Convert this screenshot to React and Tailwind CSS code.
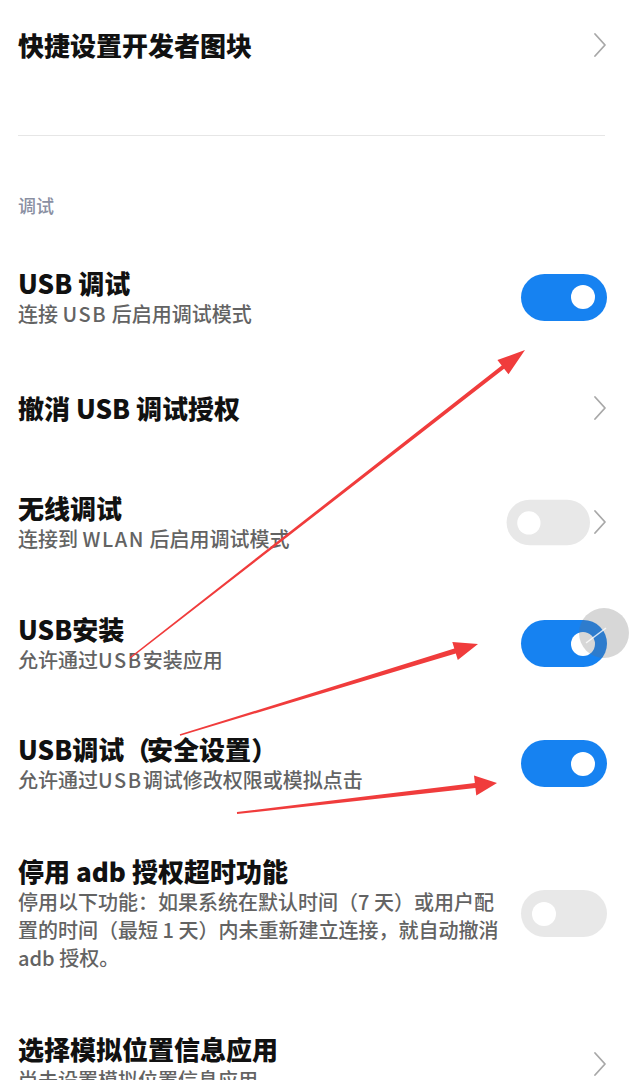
import React from 'react';

const font = { fontFamily: '"Noto Sans CJK SC", "Noto Sans", sans-serif' };

// chevron on the right side of link rows
const Chevron = () => (
  <svg width="14" height="26" viewBox="0 0 14 26" className="shrink-0">
    <polyline points="2,2 12,13 2,24" fill="none" stroke="#a8a8a8" strokeWidth="1.8" strokeLinecap="round" strokeLinejoin="round" />
  </svg>
);

const Toggle = ({ on }) => (
  <div
    className={
      'relative w-[86px] h-[47px] rounded-full shrink-0 ' +
      (on ? 'bg-[#1682f1]' : 'bg-[#e8e8e8]')
    }
  >
    <div
      className={
        'absolute top-[11.5px] w-[24px] h-[24px] rounded-full bg-white ' +
        (on ? 'right-[12px]' : 'left-[11px]')
      }
    />
  </div>
);

const Title = ({ children }) => (
  <div className="text-[26px] leading-[32px] font-black text-[#111]">{children}</div>
);

const Sub = ({ children }) => (
  <div className="mt-[1px] text-[20px] leading-[28px] font-medium text-[#636363]">{children}</div>
);

// latin words in the subtitles run a little wider
const L = ({ children }) => <span className="tracking-[0.08em]">{children}</span>;

// builds the tapered red arrow used for the annotations
const arrowPoints = (tx, ty, px, py, headLen, headW, neckW, tailW) => {
  const dx = px - tx;
  const dy = py - ty;
  const len = Math.sqrt(dx * dx + dy * dy);
  const ux = dx / len;
  const uy = dy / len;
  const nx = -uy;
  const ny = ux;
  const kx = px - ux * headLen;
  const ky = py - uy * headLen;
  const pts = [
    [tx + nx * tailW / 2, ty + ny * tailW / 2],
    [kx + nx * neckW / 2, ky + ny * neckW / 2],
    [kx + nx * headW / 2, ky + ny * headW / 2],
    [px, py],
    [kx - nx * headW / 2, ky - ny * headW / 2],
    [kx - nx * neckW / 2, ky - ny * neckW / 2],
    [tx - nx * tailW / 2, ty - ny * tailW / 2],
  ];
  return pts.map(p => p[0].toFixed(1) + ',' + p[1].toFixed(1)).join(' ');
};

export default function App() {
  return (
    <div className="relative w-[640px] h-[1080px] overflow-hidden bg-white" style={font}>
      <div className="pl-[18px] pr-[33px]">
        {/* quick settings tile row */}
        <div className="h-[90px] flex items-center justify-between">
          <Title>快捷设置开发者图块</Title>
          <Chevron />
        </div>

        <div className="h-[45px]" />
        <div className="border-t border-[#e6e6e6] mr-[2px]" />

        <div className="mt-[57px] text-[18px] leading-[24px] font-medium text-[#8a8fa2]">调试</div>

        {/* USB 调试 */}
        <div className="mt-[20px] h-[120px] flex items-center justify-between">
          <div>
            <Title>USB 调试</Title>
            <Sub>连接 <L>USB</L> 后启用调试模式</Sub>
          </div>
          <Toggle on />
        </div>

        {/* 撤消 */}
        <div className="h-[101px] flex items-center justify-between">
          <Title>撤消 USB 调试授权</Title>
          <Chevron />
        </div>

        {/* 无线调试 */}
        <div className="h-[128px] flex items-center justify-between">
          <div>
            <Title>无线调试</Title>
            <Sub>连接到 <L>WLAN</L> 后启用调试模式</Sub>
          </div>
          <div className="flex items-center gap-[3px]">
            <div className="scale-[0.97] origin-right">
              <Toggle />
            </div>
            <Chevron />
          </div>
        </div>

        {/* USB安装 */}
        <div className="h-[115px] flex items-center justify-between">
          <div>
            <Title>USB安装</Title>
            <Sub>允许通过<L>USB</L>安装应用</Sub>
          </div>
          <Toggle on />
        </div>

        {/* USB调试（安全设置） */}
        <div className="h-[125px] flex items-center justify-between">
          <div>
            <Title>USB调试<span className="tracking-[-0.12em]">（</span>安全设置<span className="tracking-[-0.12em]">）</span></Title>
            <Sub>允许通过<L>USB</L>调试修改权限或模拟点击</Sub>
          </div>
          <Toggle on />
        </div>

        {/* adb timeout */}
        <div className="h-[175px] flex items-center justify-between">
          <div>
            <Title>停用 adb 授权超时功能</Title>
            <Sub>
              <div>停用以下功能：如果系统在默认时间（7 天）或用户配</div>
              <div>置的时间（最短 1 天）内未重新建立连接，就自动撤消</div>
              <div>adb 授权。</div>
            </Sub>
          </div>
          <Toggle />
        </div>

        {/* mock location */}
        <div className="h-[125px] flex items-center justify-between">
          <div>
            <Title>选择模拟位置信息应用</Title>
            <Sub>尚未设置模拟位置信息应用</Sub>
          </div>
          <Chevron />
        </div>
      </div>

      {/* annotation overlay */}
      <svg className="absolute inset-0 pointer-events-none" width="640" height="1080" viewBox="0 0 640 1080">
        <circle cx="604" cy="633" r="25" fill="rgba(110,110,110,0.28)" />
        <line x1="586" y1="643" x2="606" y2="628" stroke="#ffffff" strokeWidth="1.5" strokeOpacity="0.8" />
        <polygon points={arrowPoints(130, 658, 525, 350, 28, 18, 4, 1.5)} fill="#f03c3c" />
        <polygon points={arrowPoints(180, 735, 478, 644, 24, 19, 5, 1.5)} fill="#f03c3c" />
        <polygon points={arrowPoints(237, 813, 497, 783, 22, 20, 5, 2)} fill="#f03c3c" />
      </svg>
    </div>
  );
}
